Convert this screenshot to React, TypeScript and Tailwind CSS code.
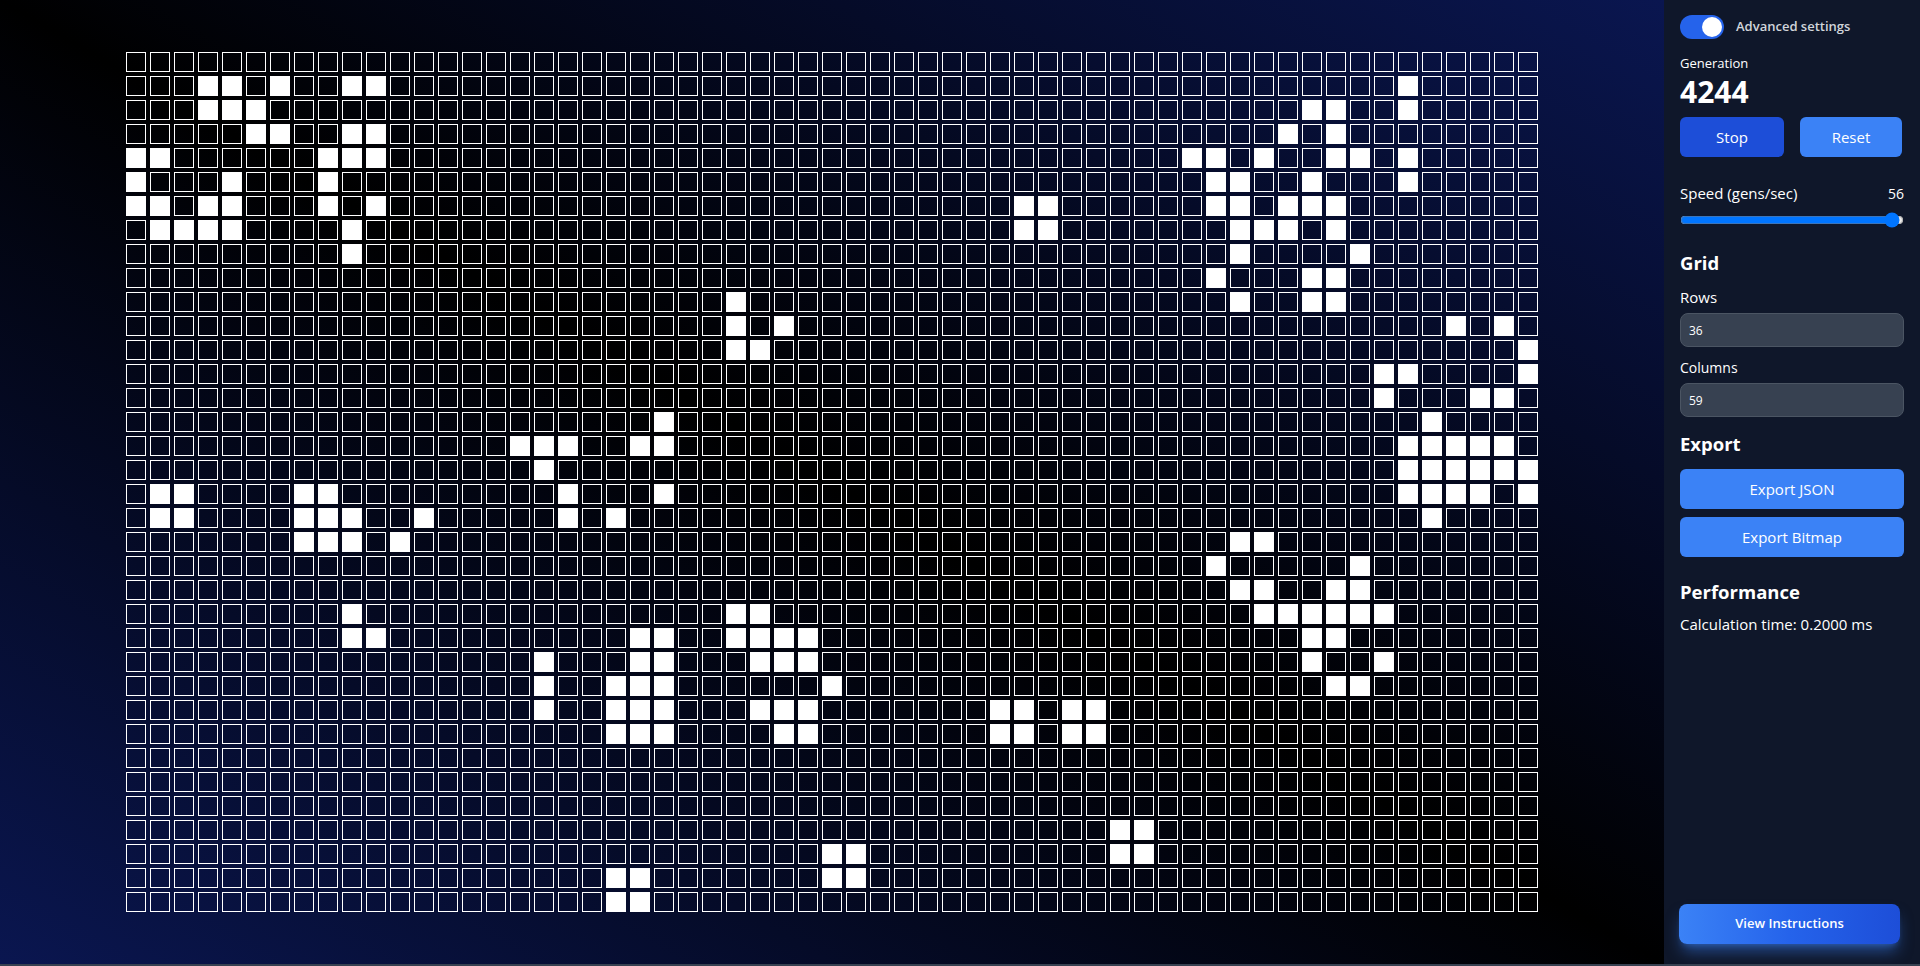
import React, { useState } from "react";

const ROWS = 36;
const COLS = 59;

// live cells per row at generation 4244
const LIVE: Record<number, number[]> = {
  1: [3, 4, 6, 9, 10, 53],
  2: [3, 4, 5, 49, 50, 53],
  3: [5, 6, 9, 10, 48, 50],
  4: [0, 1, 8, 9, 10, 44, 45, 47, 50, 51, 53],
  5: [0, 4, 8, 45, 46, 49, 53],
  6: [0, 1, 3, 4, 8, 10, 37, 38, 45, 46, 48, 49, 50],
  7: [1, 2, 3, 4, 9, 37, 38, 46, 47, 48, 50],
  8: [9, 46, 51],
  9: [45, 49, 50],
  10: [25, 46, 49, 50],
  11: [25, 27, 55, 57],
  12: [25, 26, 58],
  13: [52, 53, 58],
  14: [52, 56, 57],
  15: [22, 54],
  16: [16, 17, 18, 21, 22, 53, 54, 55, 56, 57],
  17: [17, 53, 54, 55, 56, 57, 58],
  18: [1, 2, 7, 8, 18, 22, 53, 54, 55, 56, 58],
  19: [1, 2, 7, 8, 9, 12, 18, 20, 54],
  20: [7, 8, 9, 11, 46, 47],
  21: [45, 51],
  22: [46, 47, 50, 51],
  23: [9, 25, 26, 47, 48, 49, 50, 51, 52],
  24: [9, 10, 21, 22, 25, 26, 27, 28, 49, 50],
  25: [17, 21, 22, 26, 27, 28, 49, 52],
  26: [17, 20, 21, 22, 29, 50, 51],
  27: [17, 20, 21, 22, 26, 27, 28, 36, 37, 39, 40],
  28: [20, 21, 22, 27, 28, 36, 37, 39, 40],
  32: [41, 42],
  33: [29, 30, 41, 42],
  34: [20, 21, 29, 30],
  35: [20, 21],
};

const Grid = () => (
  <div className="grid grid-cols-[repeat(59,20px)] gap-1">
    {Array.from({ length: ROWS * COLS }).map((_, i) => {
      const row = Math.floor(i / COLS);
      const alive = LIVE[row]?.includes(i % COLS);
      return (
        <div
          key={i}
          className={`h-5 w-5 border border-white ${alive ? "bg-white" : ""}`}
        />
      );
    })}
  </div>
);

const NumberField = ({ label, labelSize, value }: { label: string; labelSize: string; value: number }) => (
  <div>
    <label className={`block h-[19px] leading-[19px] text-white ${labelSize}`}>{label}</label>
    <input
      type="number"
      defaultValue={value}
      className="mt-[6px] block h-[34px] w-full rounded-lg border border-[#4b5563] bg-[#374151] px-2 text-xs text-white [appearance:textfield]"
    />
  </div>
);

const App = () => {
  const [speed, setSpeed] = useState(56);

  return (
    <div className="flex h-[966px] w-full flex-col overflow-hidden font-['Open_Sans','Noto_Sans',sans-serif] text-white">
      <div className="flex h-[964px]">
        <main className="flex flex-1 items-center justify-center bg-linear-to-tr/srgb from-[#0a1650] via-black to-[#0a1650]">
          <Grid />
        </main>

        <aside className="flex w-[256px] flex-col bg-[#0f172a] px-4 pt-[15px] pb-5">
          <div className="flex h-6 items-center gap-3">
            <button className="flex h-6 w-11 items-center justify-end rounded-full bg-[#2563eb] px-[2px]">
              <span className="h-5 w-5 rounded-full bg-white" />
            </button>
            <span className="text-[13px] font-semibold text-[#d1d5db]">Advanced settings</span>
          </div>

          <div className="mt-[15px] h-[19px] text-[13px] leading-[19px]">Generation</div>
          <div className="mt-[2px] h-[34px] text-[30px] leading-[34px] font-bold">4244</div>

          <div className="mt-2 flex gap-4">
            <button className="h-10 w-[104px] rounded-md bg-[#1d4ed8] text-[15px]">Stop</button>
            <button className="h-10 w-[102px] rounded-md bg-[#3b82f6] text-[15px]">Reset</button>
          </div>

          <div className="mt-[26px] flex h-5 items-center justify-between text-[15px]">
            <span>Speed (gens/sec)</span>
            <span className="text-[14px]">{speed}</span>
          </div>
          <input
            type="range"
            min={1}
            max={57}
            value={speed}
            onChange={(e) => setSpeed(Number(e.target.value))}
            className="mt-[9px] block h-4 w-full"
          />

          <h2 className="mt-[23px] h-6 text-[18.5px] leading-6 font-bold">Grid</h2>
          <div className="mt-[13px] flex flex-col gap-[11px]">
            <NumberField label="Rows" labelSize="text-[15px]" value={36} />
            <NumberField label="Columns" labelSize="text-[14px]" value={59} />
          </div>

          <h2 className="mt-[15px] h-6 text-[18.5px] leading-6 font-bold">Export</h2>
          <div className="mt-[13px] flex flex-col gap-2">
            <button className="h-10 rounded-md bg-[#3b82f6] text-[15px]">Export JSON</button>
            <button className="h-10 rounded-md bg-[#3b82f6] text-[15px]">Export Bitmap</button>
          </div>

          <h2 className="mt-[23px] h-6 text-[18.5px] leading-6 font-bold">Performance</h2>
          <p className="mt-[10px] text-[15px] leading-5">Calculation time: 0.2000 ms</p>

          <button className="mt-auto -ml-px h-10 w-[221px] rounded-lg bg-linear-to-r/srgb from-[#3b82f6] via-[#2563eb] to-[#1d4ed8] text-[13px] font-semibold shadow-lg shadow-[#3b82f6]/50">
            View Instructions
          </button>
        </aside>
      </div>
      <div className="h-[2px] bg-[#374151]" />
    </div>
  );
};

export default App;
